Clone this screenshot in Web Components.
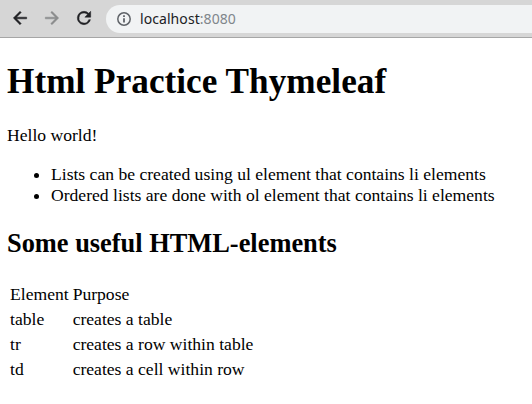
<!DOCTYPE html>
<html lang="en">
<head>
<meta charset="utf-8">
<title>Html Practice Thymeleaf</title>
<style>
html, body { margin: 0; height: 100%; overflow: hidden; background: #fff; }
</style>
</head>
<body>
<browser-window>
  <browser-toolbar slot="toolbar"><address-bar><span>localhost</span><span slot="port">:8080</span></address-bar></browser-toolbar>
  <practice-page></practice-page>
</browser-window>
<script>
class Base extends HTMLElement {
  constructor() {
    super();
    this.attachShadow({ mode: 'open' }).innerHTML = this.constructor.markup;
  }
}

class BrowserWindow extends Base {
  static markup = `
    <style>
      :host { display: flex; flex-direction: column; height: 100vh; }
    </style>
    <slot name="toolbar"></slot>
    <slot></slot>`;
}

class BrowserToolbar extends Base {
  static markup = `
    <style>
      :host { display: flex; align-items: flex-start; box-sizing: border-box; flex: none;
              height: 38px; padding-top: 5px; background: #d6d6d6; border-bottom: 1px solid #a6a6a6; }
      nav { display: flex; gap: 12px; padding: 3px 12px 0 10px; flex: none; }
      svg { display: block; width: 20px; height: 20px; fill: #202124; }
      .off { fill: #8b8c8d; }
      slot { display: block; flex: 1; min-width: 0; }
    </style>
    <nav>
      <svg viewBox="0 0 24 24"><path d="M20 11H7.83l5.59-5.59L12 4l-8 8 8 8 1.41-1.41L7.83 13H20z" stroke="#202124" stroke-width=".6"/></svg>
      <svg class="off" viewBox="0 0 24 24"><path d="M4 11h12.17l-5.59-5.59L12 4l8 8-8 8-1.41-1.41L16.17 13H4z" stroke="#8b8c8d" stroke-width=".6"/></svg>
      <svg viewBox="0 0 24 24"><path d="M17.65 6.35A7.96 7.96 0 0 0 12 4a8 8 0 1 0 7.73 10h-2.08A6 6 0 1 1 12 6c1.66 0 3.14.69 4.22 1.78L13 11h7V4z" stroke="#202124" stroke-width=".6"/></svg>
    </nav>
    <slot></slot>`;
}

class AddressBar extends Base {
  static markup = `
    <style>
      :host { display: flex; align-items: center; height: 28px; box-sizing: border-box; padding-left: 10px;
              background: #f1f3f4; border-radius: 14px 0 0 14px; color: #202124;
              font: 14px/28px "Noto Sans", sans-serif; letter-spacing: .07px; }
      svg { display: block; width: 16px; height: 16px; margin-right: 8px; flex: none; }
      .port { color: #80868b; }
    </style>
    <svg viewBox="0 0 16 16"><circle cx="8" cy="8" r="6.2" fill="none" stroke="#5f6368" stroke-width="1.5"/><path d="M7.1 4.2h1.8V6H7.1zM7.1 7.2h1.8v4.4H7.1z" fill="#5f6368"/></svg>
    <slot></slot><span class="port"><slot name="port"></slot></span>`;
}

class PracticePage extends Base {
  static markup = `
    <style>
      :host { display: block; flex: 1; padding: 0 8px 0 7px; color: #000;
              font: 17.6px/20px "Liberation Serif", serif; }
      h1 { font-size: 35.2px; line-height: 40px; margin: 24px 0 23px; letter-spacing: .03px; }
      p { margin: 0 0 19px; }
      ul { margin: 0; padding-left: 44px; }
      li { line-height: 21px; }
      h2 { font-size: 26.4px; line-height: 30px; margin: 22px 0 23px; }
      table { border-spacing: 2px; }
      td { padding: 1px; line-height: 21px; }
    </style>
    <h1>Html Practice Thymeleaf</h1>
    <p>Hello world!</p>
    <ul>
      <li>Lists can be created using ul element that contains li elements</li>
      <li>Ordered lists are done with ol element that contains li elements</li>
    </ul>
    <h2>Some useful HTML-elements</h2>
    <table>
      <tr><td>Element</td><td>Purpose</td></tr>
      <tr><td>table</td><td>creates a table</td></tr>
      <tr><td>tr</td><td>creates a row within table</td></tr>
      <tr><td>td</td><td>creates a cell within row</td></tr>
    </table>`;
}

customElements.define('browser-window', BrowserWindow);
customElements.define('browser-toolbar', BrowserToolbar);
customElements.define('address-bar', AddressBar);
customElements.define('practice-page', PracticePage);
</script>
</body>
</html>
